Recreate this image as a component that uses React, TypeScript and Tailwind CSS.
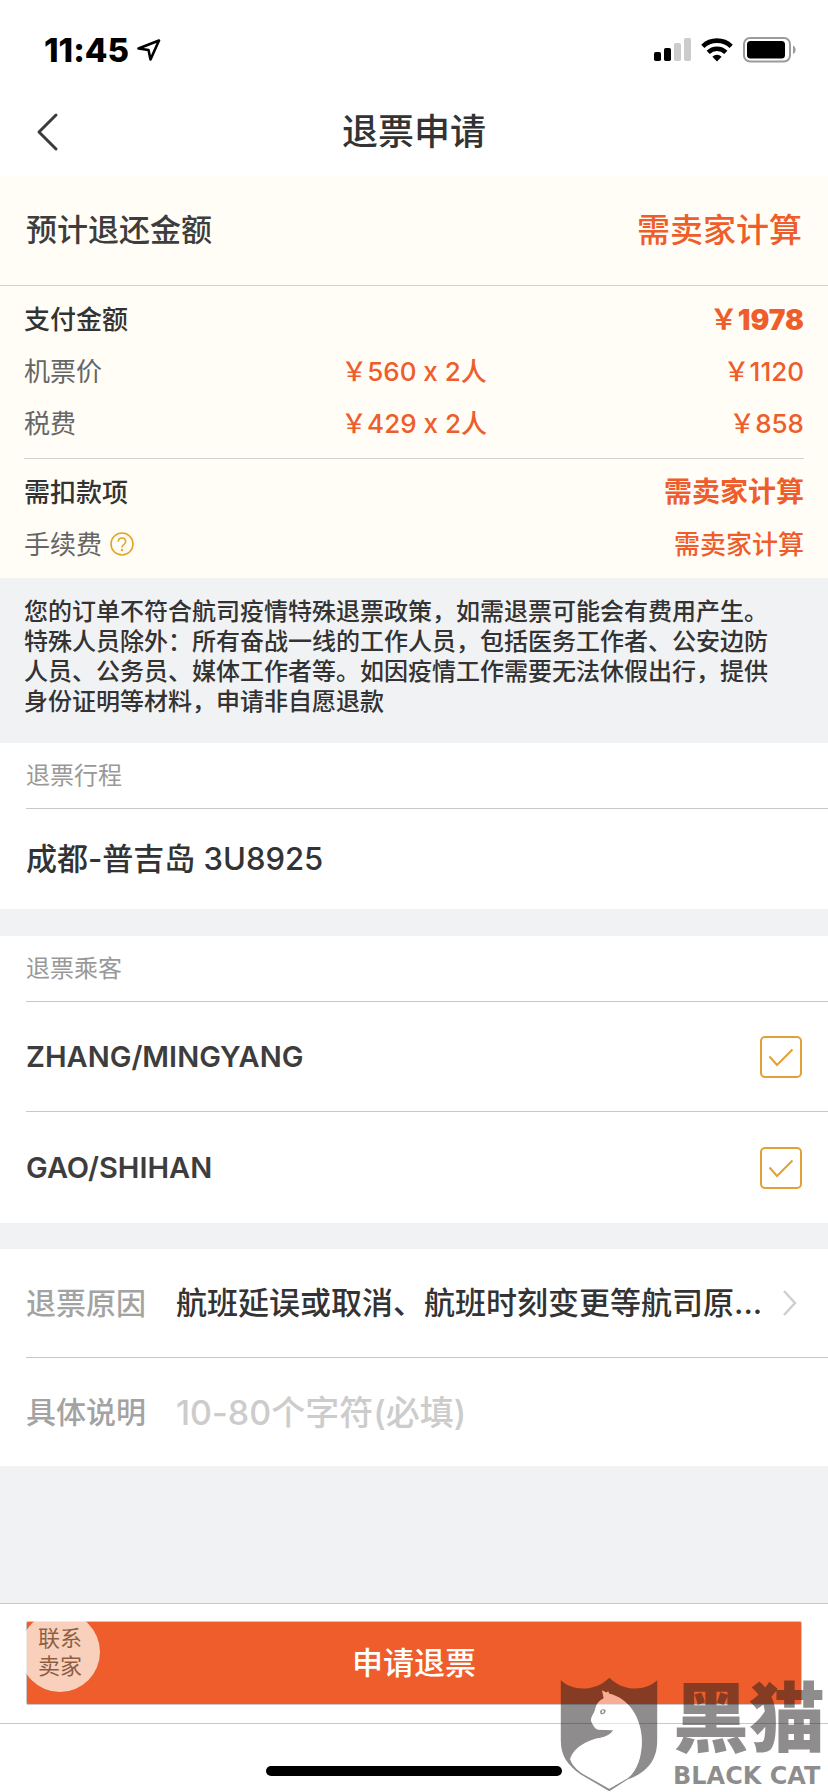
import { useState } from 'react';

const passengers = ['ZHANG/MINGYANG', 'GAO/SHIHAN'];

const prices = [
    { label: '机票价', detail: '￥560 x 2人', total: '￥1120' },
    { label: '税费', detail: '￥429 x 2人', total: '￥858' },
];

function StatusBar() {
    return (
        <div className="flex h-22 items-center justify-between pt-3 pr-8 pl-[44px] text-black">
            <div className="flex items-center gap-2">
                <span className="text-[33px] leading-9 font-extrabold">11:45</span>
                <svg className="h-[22px] w-[24px]" viewBox="0 0 24 22" fill="none" stroke="currentColor" strokeWidth="2.600" strokeLinejoin="round">
                    <path d="M22 1.500 13.500 20.500 11.500 11 1.500 9.500Z" />
                </svg>
            </div>
            <div className="flex items-center gap-[10px]">
                <svg className="h-[26px] w-[37px]" viewBox="0 0 37 26">
                    <rect x="0" y="15" width="7" height="9" rx="1.800" />
                    <rect x="10" y="11" width="7" height="13" rx="1.800" />
                    <rect x="20" y="6" width="7" height="18" rx="1.800" fill="#cccccc" />
                    <rect x="30" y="1" width="7" height="23" rx="1.800" fill="#cccccc" />
                </svg>
                <svg className="h-[26px] w-[32px]" viewBox="0 0 32 26" fill="none" stroke="currentColor" strokeWidth="4.600">
                    <path d="M1.800 9.300a20.500 20.500 0 0 1 28.400 0" />
                    <path d="M7.200 15.300a12.600 12.600 0 0 1 17.600 0" />
                    <path d="M16 24.500l-4.600-4.800a6.500 6.500 0 0 1 9.200 0z" fill="currentColor" stroke="none" />
                </svg>
                <svg className="h-[26px] w-[53px]" viewBox="0 0 53 26">
                    <rect x="1" y="1" width="46" height="23.500" rx="6" fill="none" stroke="#9b9b9b" strokeWidth="2" />
                    <rect x="4" y="4" width="38" height="17.500" rx="3.500" />
                    <path d="M50 8.500c3.500 1.500 3.500 7 0 8.500z" fill="#9b9b9b" />
                </svg>
            </div>
        </div>
    );
}

function SectionTitle({ children }: { children: string }) {
    return <h2 className="ml-[26px] flex h-[66px] items-center border-b border-[#c8c8c8] text-2xl text-[#999999]">{children}</h2>;
}

function PassengerRow({ name, last }: { name: string; last: boolean }) {
    const [checked, setChecked] = useState(true);

    return (
        <label className={`ml-[26px] flex items-center justify-between pr-[26px] ${last ? 'h-[111px]' : 'h-[110px] border-b border-[#c8c8c8]'}`}>
            <span className="text-[29px] font-semibold text-[#3d3d3d]">{name}</span>
            <span className="grid">
                <input
                    type="checkbox"
                    checked={checked}
                    onChange={() => setChecked(!checked)}
                    className="col-start-1 row-start-1 size-[42px] appearance-none rounded-[5px] border-2 border-[#e3a035]"
                />
                {checked && (
                    <svg className="pointer-events-none col-start-1 row-start-1 size-[42px]" viewBox="0 0 42 42" fill="none" stroke="#e3a035" strokeWidth="2">
                        <path d="M9.500 20.500 17 29 32.500 13.500" />
                    </svg>
                )}
            </span>
        </label>
    );
}

function Watermark() {
    return (
        <div className="pointer-events-none absolute right-0 bottom-0 flex items-end gap-[15px] pr-[3px] text-[#1e191c]/50">
            {/* Shield with the cat cut out of it */}
            <svg className="h-[115px] w-[98px]" viewBox="56 50 294 346">
                <path
                    fill="currentColor"
                    fillRule="evenodd"
                    d="M58 60C92 93 162 95 204 52C246 95 314 93 348 60V240C348 295 324 334 260 358L204 394L118 343C78 314 58 288 58 240ZM182 90L187 114C174 120 165 130 162 144C160 160 148 166 149 183C154 190 156 204 172 209L216 210C206 224 194 228 178 233C136 240 98 262 86 297C91 314 106 330 125 342L204 386L260 354C288 330 302 290 302 240C300 172 262 114 203 100L201 93L195 97Z"
                />
                <path
                    fill="#ffffff"
                    fillOpacity="0.5"
                    d="M182 90L187 114C174 120 165 130 162 144C160 160 148 166 149 183C154 190 156 204 172 209L216 210C206 224 194 228 178 233C136 240 98 262 86 297C91 314 106 330 125 342L204 386L260 354C288 330 302 290 302 240C300 172 262 114 203 100L201 93L195 97Z"
                />
                <path fill="currentColor" fillRule="evenodd" d="M176 153C182 145 190 147 193 150C193 158 188 163 178 162ZM182 150L181 158C186 160 188 156 188 151Z" />
            </svg>
            <div className="flex flex-col gap-[6px] pb-[2px]">
                <span className="text-[76px] leading-[76px] font-black">黑猫</span>
                <span className="font-['DejaVu_Sans',sans-serif] text-2xl leading-7 font-bold whitespace-nowrap">BLACK CAT</span>
            </div>
        </div>
    );
}

export default function App() {
    return (
        <div className="relative flex min-h-screen flex-col bg-[#f1f2f4] font-[Inter,'Noto_Sans_CJK_SC',sans-serif] text-[#333333] [font-feature-settings:'calt'_0]">
            <header className="bg-white">
                <StatusBar />
                <div className="grid h-22 grid-cols-[1fr_auto_1fr] items-center px-[34px]">
                    <button type="button" aria-label="返回" className="justify-self-start">
                        <svg className="h-[40px] w-[26px]" viewBox="0 0 26 40" fill="none" stroke="#3a3a3a" strokeWidth="3" strokeLinecap="round" strokeLinejoin="round">
                            <path d="M22 3 5 20 22 37" />
                        </svg>
                    </button>
                    <h1 className="text-4xl font-medium">退票申请</h1>
                </div>
            </header>

            {/* Refund amount */}
            <section className="bg-[#fffdf6]">
                <div className="flex h-[110px] items-center justify-between border-b border-[#d2d2d2] px-[26px]">
                    <span className="text-[31px] font-medium text-[#3d3d3d]">预计退还金额</span>
                    <span className="text-[33px] font-medium text-[#ee5d2b]">需卖家计算</span>
                </div>
                <div className="px-6 text-[26px]">
                    <table className="my-2 w-full table-fixed">
                        <tbody>
                            <tr className="h-13">
                                <th scope="row" className="text-left leading-10 font-medium">支付金额</th>
                                <td />
                                <td className="text-right text-[28px] leading-10 font-bold text-[#ee5d2b]">
                                    ￥<b className="font-black">1978</b>
                                </td>
                            </tr>
                            {prices.map((price) => (
                                <tr key={price.label} className="h-13 text-[#ee5d2b]">
                                    <th scope="row" className="text-left leading-10 font-normal text-[#666666]">{price.label}</th>
                                    <td className="text-center leading-10 font-medium">{price.detail}</td>
                                    <td className="text-right leading-10 font-medium">{price.total}</td>
                                </tr>
                            ))}
                        </tbody>
                    </table>
                    <div className="border-t border-[#d2d2d2] pt-[7px] pb-2">
                        <div className="flex h-13 items-center justify-between font-medium">
                            <span>需扣款项</span>
                            <span className="text-[28px] font-bold text-[#ee5d2b]">需卖家计算</span>
                        </div>
                        <div className="flex h-13 items-center justify-between">
                            <span className="flex items-center gap-2 text-[#666666]">
                                手续费
                                <button type="button" aria-label="手续费说明">
                                    <svg className="size-6" viewBox="0 0 24 24" fill="none" stroke="#e0a526" strokeWidth="1.600">
                                        <circle cx="12" cy="12" r="11" />
                                        <path d="M8.300 9.800c0-5 7.400-5 7.400-.3 0 3-3.700 3-3.700 6" />
                                        <circle cx="12" cy="18" r="1.200" fill="#e0a526" stroke="none" />
                                    </svg>
                                </button>
                            </span>
                            <span className="font-medium text-[#ee5d2b]">需卖家计算</span>
                        </div>
                    </div>
                </div>
            </section>

            {/* Policy notice */}
            <p className="pt-[19px] pr-10 pb-[26px] pl-6 text-2xl leading-[30px] font-medium">
                您的订单不符合航司疫情特殊退票政策，如需退票可能会有费用产生。
                <br />
                特殊人员除外：所有奋战一线的工作人员，包括医务工作者、公安边防人员、公务员、媒体工作者等。如因疫情工作需要无法休假出行，提供身份证明等材料，申请非自愿退款
            </p>

            <section className="bg-white">
                <SectionTitle>退票行程</SectionTitle>
                <p className="flex h-[100px] items-center px-[26px] text-[31px] font-medium">成都-普吉岛 3U8925</p>
            </section>

            <section className="mt-[27px] bg-white">
                <SectionTitle>退票乘客</SectionTitle>
                {passengers.map((name, index) => (
                    <PassengerRow key={name} name={name} last={index === passengers.length - 1} />
                ))}
            </section>

            {/* Reason and description */}
            <section className="mt-[26px] bg-white">
                <div className="ml-[26px] flex h-[109px] items-center border-b border-[#c8c8c8] pr-[30px]">
                    <span id="reason" className="w-[150px] text-[30px] font-medium text-[#a3a3a3]">退票原因</span>
                    <button type="button" aria-labelledby="reason" className="flex flex-1 items-center justify-between text-left text-[31px] font-medium">
                        航班延误或取消、航班时刻变更等航司原...
                        <svg className="h-[28px] w-[16px]" viewBox="0 0 16 28" fill="none" stroke="#cfcfcf" strokeWidth="2.500">
                            <path d="M2 2 13 14 2 26" />
                        </svg>
                    </button>
                </div>
                <div className="ml-[26px] flex h-[108px] items-center pr-[26px]">
                    <label htmlFor="detail" className="w-[150px] text-[30px] font-medium text-[#a3a3a3]">具体说明</label>
                    <input id="detail" type="text" placeholder="10-80个字符(必填)" className="min-w-0 flex-1 text-[34px] font-medium outline-none placeholder:text-[#cccccc]" />
                </div>
            </section>

            <div className="min-h-16 flex-1" />

            <footer className="border-t border-[#c8c8c8] bg-white">
                <div className="border-b border-[#c8c8c8] px-[26px] pt-[17px] pb-[18px]">
                    <div className="relative overflow-hidden rounded-[2px]">
                        <button type="button" className="block h-[84px] w-full rounded-[2px] border border-[#c8c8c8] bg-[#ee5d2b] text-[31px] font-medium text-white">
                            申请退票
                        </button>
                        {/* Floating contact button */}
                        <button type="button" className="absolute -top-[9px] -left-[6px] size-20 rounded-full bg-[#fbf7ee]/75 text-[22px] leading-7 text-[#6b3818]/75">
                            联系
                            <br />
                            卖家
                        </button>
                    </div>
                </div>
                <div className="flex h-17 justify-center pt-[42px]">
                    <div className="h-[10px] w-[296px] rounded-full bg-black" />
                </div>
            </footer>

            <Watermark />
        </div>
    );
}
